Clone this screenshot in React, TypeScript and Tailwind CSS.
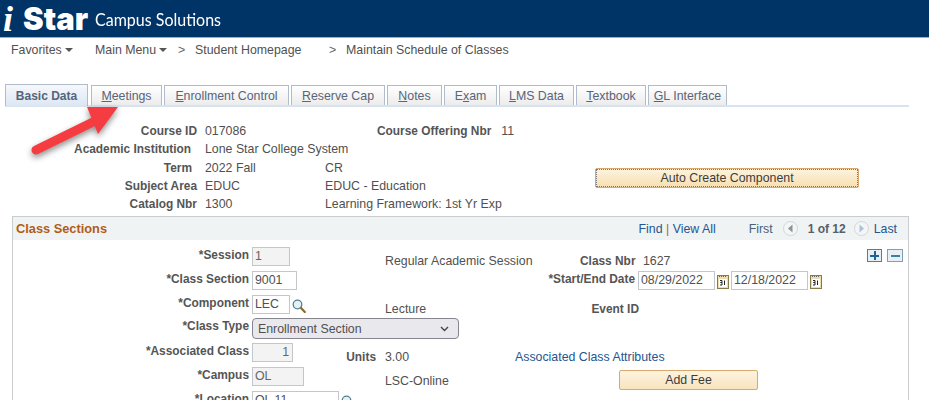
import React from 'react';

const tabs = [
  { pre: '', u: 'M', post: 'eetings', w: 'w-[71px]' },
  { pre: '', u: 'E', post: 'nrollment Control', w: 'w-[125px]' },
  { pre: '', u: 'R', post: 'eserve Cap', w: 'w-[94px]' },
  { pre: '', u: 'N', post: 'otes', w: 'w-[55px]' },
  { pre: 'E', u: 'x', post: 'am', w: 'w-[53px]' },
  { pre: '', u: 'L', post: 'MS Data', w: 'w-[75px]' },
  { pre: '', u: 'T', post: 'extbook', w: 'w-[70px]' },
  { pre: '', u: 'G', post: 'L Interface', w: 'w-[79px]' },
];

const topRows = [
  { label: 'Course ID', value: '017086', extra: '', h: 'h-[18px]', pr: 'pr-0' },
  { label: 'Academic Institution', value: 'Lone Star College System', extra: '', h: 'h-[19px]', pr: 'pr-[6px]' },
  { label: 'Term', value: '2022 Fall', extra: 'CR', h: 'h-[18px]', pr: 'pr-[5px]' },
  { label: 'Subject Area', value: 'EDUC', extra: 'EDUC - Education', h: 'h-[18px]', pr: 'pr-0' },
  { label: 'Catalog Nbr', value: '1300', extra: 'Learning Framework: 1st Yr Exp', h: 'h-[19px]', pr: 'pr-0' },
];

const Caret = () => (
  <span className="inline-block ml-[3px] mb-[2px] w-0 h-0 border-x-[4px] border-x-transparent border-t-[4px] border-t-[#555]" />
);

const Lens = () => (
  <svg width="14" height="14" viewBox="0 0 14 14" className="ml-[2px] mt-[4px] shrink-0">
    <circle cx="5.5" cy="5.5" r="4.3" fill="#e3f1f6" stroke="#55808f" strokeWidth="1.3" />
    <path d="M8.8 8.8l4 4.2" stroke="#8a6a30" strokeWidth="2.2" strokeLinecap="round" />
  </svg>
);

const Cal = () => (
  <svg width="12" height="15" viewBox="0 0 12 15" className="mx-[2px] mt-[3px] shrink-0">
    <rect x="0.5" y="1.5" width="11" height="13" fill="#ecdcae" stroke="#8a7a4a" />
    <rect x="2" y="5" width="8" height="8" fill="#fff" />
    <path d="M2 2.5h8" stroke="#666" strokeDasharray="1 1" />
    <path d="M3 6.5h2v2h-1.5h1.5v2.5h-2M7.5 6.5v4.5" fill="none" stroke="#222" />
  </svg>
);

const Pager = ({ dir }: { dir: 'l' | 'r' }) => (
  <svg width="15" height="15" viewBox="0 0 15 15" className="block">
    <circle cx="7.5" cy="7.5" r="7" fill="#f4f5f6" stroke="#d2d6d9" />
    <path d={dir === 'l' ? 'M9.5 3.5v8L5 7.5z' : 'M5.5 3.5v8L10 7.5z'} fill={dir === 'l' ? '#8e9396' : '#a9c4da'} />
  </svg>
);

const Field = ({ w, v, ro, right }: { w: string; v: string; ro?: boolean; right?: boolean }) => (
  <div className={`${w} h-[19px] border border-[#c4c7c9] pl-[2px] leading-[17px] shrink-0 ${ro ? 'bg-[#f3f3f3] text-[#666]' : 'bg-white'} ${right ? 'text-right pr-[3px]' : ''}`}>
    {v}
  </div>
);

const Label = ({ children }: { children: React.ReactNode }) => (
  <div className="w-[239px] pr-[3px] mt-[1px] text-right font-bold text-[11.9px] shrink-0 text-[#555]">{children}</div>
);

export default function App() {
  return (
    <div className="relative w-[929px] h-[400px] overflow-hidden bg-white text-[12.35px] leading-[14px] text-[#505050] font-['Liberation_Sans',Arial,sans-serif]">
      {/* banner */}
      <div className="h-[38px] bg-[#003366] border-b border-[#8fb3d4] flex items-center pl-[3px] text-white">
        <span className="w-[20px] font-['Liberation_Serif',serif] italic font-bold text-[36px] leading-[36px]">i</span>
        <span className="w-[72px] font-['Inter',sans-serif] font-black text-[31px] leading-[36px]">Star</span>
        <span className="font-['Lato',sans-serif] text-[18px] leading-[36px] inline-block origin-left scale-x-[0.89] whitespace-nowrap">Campus Solutions</span>
      </div>

      {/* breadcrumbs */}
      <div className="h-[23px] flex items-center pl-[11px]">
        <span className="w-[84px]">Favorites<Caret /></span>
        <span className="w-[83px]">Main Menu<Caret /></span>
        <span className="w-[17px] text-[#666]">&gt;</span>
        <span className="w-[134px]">Student Homepage</span>
        <span className="w-[17px] text-[#666]">&gt;</span>
        <span>Maintain Schedule of Classes</span>
      </div>

      {/* tabs */}
      <div className="mt-[23px] ml-[5px] w-[904px] h-[23px] flex items-start border-b-2 border-[#d8e3ef]">
        <div className="w-[83px] h-[22px] border border-b-0 border-[#b0bccc] bg-gradient-to-b from-[#f6f8fb] to-[#dce7f3] font-bold text-[12px] text-[#55647c] text-center leading-[22px] mr-[3px] shrink-0">
          Basic Data
        </div>
        {tabs.map(t => (
          <div key={t.post} className={`${t.w} h-[20px] mt-[1px] mr-[2px] border border-b-0 border-[#b0bccc] bg-gradient-to-b from-white to-[#ececec] text-[#58657a] text-center leading-[20px] shrink-0`}>
            {t.pre}<span className="underline">{t.u}</span>{t.post}
          </div>
        ))}
      </div>

      {/* course details */}
      <div className="relative mt-[17px] h-[92px]">
        {topRows.map((r, i) => (
          <div key={r.label} className={`${r.h} flex items-start`}>
            <div className={`w-[197px] text-right font-bold text-[11.9px] shrink-0 text-[#555] ${r.pr}`}>{r.label}</div>
            <div className="w-[120px] ml-[8px] whitespace-nowrap shrink-0">{r.value}</div>
            {i === 0 && (
              <>
                <div className="ml-[52px] font-bold text-[11.9px] text-[#555] shrink-0">Course Offering Nbr</div>
                <div className="ml-[10px]">11</div>
              </>
            )}
            {r.extra && <div className="whitespace-nowrap">{r.extra}</div>}
          </div>
        ))}
        <div className="absolute left-[595px] top-[44px] w-[264px] h-[20px] rounded-[2px] border border-[#d9a86c] bg-gradient-to-b from-[#fdf3de] to-[#f8dfb0] text-center text-[#3c3c3c]">
          <div className="h-full border border-dotted border-[#777] leading-[17px]">Auto Create Component</div>
        </div>
      </div>

      {/* class sections */}
      <div className="ml-[12px] w-[897px] h-[300px] border border-b-0 border-[#c9cdd0]">
        <div className="h-[23px] bg-[#f0f3f4] flex items-center pl-[3px] pr-[11px]">
          <span className="font-bold text-[12.8px] text-[#b05d17]">Class Sections</span>
          <span className="ml-auto text-[#23568f]">Find <span className="text-[#b05d17]">|</span> View All</span>
          <span className="ml-[33px] text-[#4a6078]">First</span>
          <span className="ml-[10px]"><Pager dir="l" /></span>
          <span className="ml-[10px] font-bold text-[12px] text-[#55606a]">1 of 12</span>
          <span className="ml-[8px]"><Pager dir="r" /></span>
          <span className="ml-[5px] text-[#23568f]">Last</span>
        </div>

        <div className="pt-[7px]">
          <div className="h-[24px] flex items-start">
            <Label>*Session</Label>
            <Field w="w-[38px]" v="1" ro />
            <div className="w-[95px] shrink-0" />
            <div className="w-[195px] mt-[7px] shrink-0 whitespace-nowrap">Regular Academic Session</div>
            <div className="w-[63px] mt-[7px] font-bold text-[11.9px] text-[#555] shrink-0">Class Nbr</div>
            <div className="mt-[7px] w-[224px] shrink-0">1627</div>
            <div className="mt-[2px] flex gap-[5px]">
              <div className="w-[15px] h-[13px] border border-[#4f7f9f] bg-[#e8f0f6] flex items-center justify-center relative">
                <span className="absolute w-[9px] h-[2px] bg-[#1f6295]" />
                <span className="absolute w-[2px] h-[9px] bg-[#1f6295]" />
              </div>
              <div className="w-[16px] h-[13px] border border-[#7f9fb5] bg-[#e8f0f6] flex items-center justify-center"><span className="w-[9px] h-[2px] bg-[#3f7fa5]" /></div>
            </div>
          </div>
          <div className="h-[24px] flex items-start">
            <Label>*Class Section</Label>
            <Field w="w-[45px]" v="9001" />
            <div className="w-[338px] mt-[1px] text-right font-bold text-[11.9px] text-[#555] shrink-0 whitespace-nowrap">*Start/End Date</div>
            <div className="ml-[3px] flex items-start">
              <Field w="w-[77px]" v="08/29/2022" />
              <Cal />
              <Field w="w-[77px]" v="12/18/2022" />
              <Cal />
            </div>
          </div>
          <div className="h-[23px] flex items-start">
            <Label>*Component</Label>
            <Field w="w-[38px]" v="LEC" />
            <Lens />
            <div className="w-[79px] shrink-0" />
            <div className="w-[195px] mt-[7px] shrink-0">Lecture</div>
            <div className="w-[59px] mt-[7px] text-right font-bold text-[11.9px] text-[#555] shrink-0">Event ID</div>
          </div>
          <div className="h-[25px] flex items-start">
            <Label>*Class Type</Label>
            <div className="w-[207px] h-[21px] rounded-[4px] border border-[#85858f] bg-[#e9e9ed] flex items-center pl-[5px] pr-[9px] justify-between shrink-0">
              <span>Enrollment Section</span>
              <svg width="9" height="6" viewBox="0 0 9 6"><path d="M1 1l3.5 3.5L8 1" fill="none" stroke="#444" strokeWidth="1.4" /></svg>
            </div>
          </div>
          <div className="h-[24px] flex items-start">
            <Label>*Associated Class</Label>
            <Field w="w-[41px]" v="1" ro right />
            <div className="w-[83px] mt-[7px] text-right font-bold text-[11.9px] text-[#555] shrink-0 whitespace-nowrap">Units</div>
            <div className="w-[130px] ml-[9px] mt-[7px] shrink-0">3.00</div>
            <div className="mt-[7px] text-[#23568f] whitespace-nowrap">Associated Class Attributes</div>
          </div>
          <div className="h-[24px] flex items-start">
            <Label>*Campus</Label>
            <Field w="w-[52px]" v="OL" ro />
            <div className="w-[81px] shrink-0" />
            <div className="w-[234px] mt-[7px] shrink-0">LSC-Online</div>
            <div className="w-[139px] h-[20px] mt-[3px] rounded-[2px] border border-[#d9a86c] bg-gradient-to-b from-[#fdf3de] to-[#f8e4bf] text-center leading-[18px] text-[#3c3c3c] shrink-0">Add Fee</div>
          </div>
          <div className="h-[24px] flex items-start">
            <Label>*Location</Label>
            <Field w="w-[87px]" v="OL 11" />
            <Lens />
          </div>
        </div>
      </div>

      {/* annotation arrow */}
      <svg className="absolute left-[25px] top-[100px] overflow-visible drop-shadow-[0_3px_3px_rgba(0,0,0,0.45)]" width="100" height="60" viewBox="0 0 100 60">
        <path d="M11 50L70 21" stroke="#f53d41" strokeWidth="9" strokeLinecap="round" />
        <path d="M62 7L93 7 73 34z" fill="#f53d41" />
      </svg>
    </div>
  );
}
